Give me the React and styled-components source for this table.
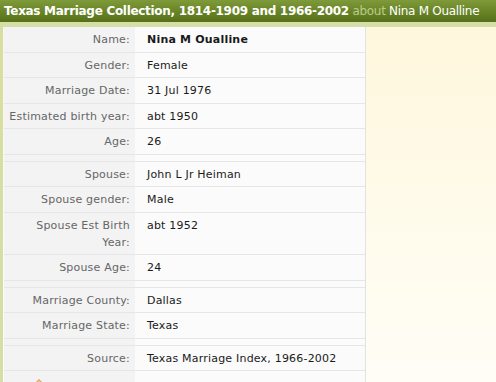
import React from 'react';
import styled, { createGlobalStyle } from 'styled-components';

const GlobalStyle = createGlobalStyle`
  html, body {
    margin: 0;
    padding: 0;
  }
  body {
    font-family: "DejaVu Sans", Verdana, sans-serif;
    background: linear-gradient(180deg, #fff6da 0%, #fffbec 60%, #fffdf6 100%);
    min-height: 382px;
    overflow: hidden;
  }
`;

const Page = styled.div`
  width: 496px;
  height: 382px;
  overflow: hidden;
`;

const TitleBar = styled.div`
  height: 22px;
  padding-left: 4px;
  background: linear-gradient(180deg, #7e9a3a 0%, #6a8527 50%, #56701a 100%);
  color: #fff;
  font-size: 12px;
  letter-spacing: -0.3px;
  line-height: 22px;
  white-space: nowrap;
`;

const TitleStrong = styled.span`
  font-weight: bold;
`;

const About = styled.span`
  color: #b9cc8a;
`;

const Band = styled.div`
  height: 5px;
  background: #d5dea7;
`;

const Body = styled.div`
  display: flex;
`;

const Edge = styled.div`
  width: 3px;
  background: #d5dea7;
  margin-right: 1px;
`;

const Table = styled.div`
  width: 361px;
  border-right: 1px solid #e2e2e2;
  font-size: 11px;
  letter-spacing: 0.2px;
`;

const Row = styled.div`
  display: grid;
  grid-template-columns: 131px 1fr;
  border-bottom: 1px solid #e6e6e6;
`;

const Label = styled.div`
  background: #f3f3f3;
  color: #666;
  text-align: right;
  padding: ${p => (p.$gap ? '0' : '4px 5px 3.5px 3px')};
  height: ${p => (p.$gap ? '6px' : 'auto')};
  line-height: 17px;
`;

const Value = styled.div`
  background: #fbfbfb;
  color: #1a1a1a;
  padding: ${p => (p.$gap ? '0' : '4px 6px 3.5px 12px')};
  line-height: 17px;
  font-weight: ${p => (p.$bold ? 'bold' : 'normal')};
`;

const IconCell = styled.div`
  background: #f3f3f3;
  padding: 5px 0 0 30px;
  height: 20px;
`;

const groups = [
  [
    ['Name:', 'Nina M Oualline', true],
    ['Gender:', 'Female'],
    ['Marriage Date:', '31 Jul 1976'],
    ['Estimated birth year:', 'abt 1950'],
    ['Age:', '26'],
  ],
  [
    ['Spouse:', 'John L Jr Heiman'],
    ['Spouse gender:', 'Male'],
    ['Spouse Est Birth Year:', 'abt 1952'],
    ['Spouse Age:', '24'],
  ],
  [
    ['Marriage County:', 'Dallas'],
    ['Marriage State:', 'Texas'],
  ],
  [['Source:', 'Texas Marriage Index, 1966-2002']],
];

export default function App() {
  return (
    <Page>
      <GlobalStyle />
      <TitleBar>
        <TitleStrong>Texas Marriage Collection, 1814-1909 and 1966-2002</TitleStrong>{' '}
        <About>about</About> Nina M Oualline
      </TitleBar>
      <Band />
      <Body>
        <Edge />
        <Table>
          {groups.map((g, gi) => (
            <React.Fragment key={gi}>
              {gi > 0 && (
                <Row>
                  <Label $gap />
                  <Value $gap />
                </Row>
              )}
              {g.map(([label, value, bold]) => (
                <Row key={label}>
                  <Label>{label}</Label>
                  <Value $bold={bold}>{value}</Value>
                </Row>
              ))}
            </React.Fragment>
          ))}
          <Row>
            <IconCell>
              <svg width="10" height="8" viewBox="0 0 10 8">
                <path d="M1 6 L5 2 L9 6" fill="none" stroke="#e3a54a" strokeWidth="1.4" />
              </svg>
            </IconCell>
            <Value />
          </Row>
        </Table>
      </Body>
    </Page>
  );
}
